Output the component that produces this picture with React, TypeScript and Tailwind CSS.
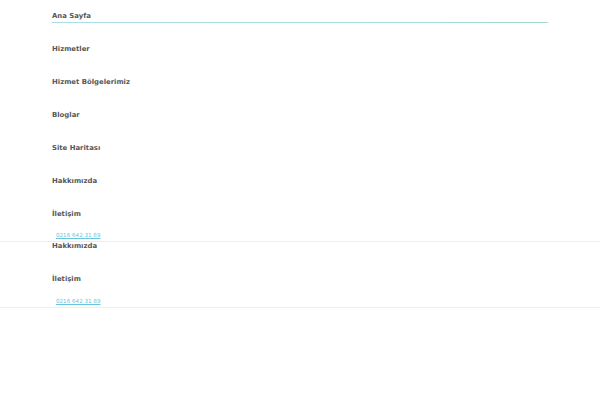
const menu = ['Ana Sayfa', 'Hizmetler', 'Hizmet Bölgelerimiz', 'Bloglar', 'Site Haritası', 'Hakkımızda', 'İletişim'];
const extra = ['Hakkımızda', 'İletişim'];

function Phone() {
  return (
    <div className="px-[56px] py-px leading-[9px] text-[5.6px] font-normal">
      <a href="#" className="text-[#6cc3dc] underline">0216 642 31 89</a>
    </div>
  );
}

export default function App() {
  return (
    <div className="min-h-[400px] bg-white font-['DejaVu_Sans',sans-serif] text-[#575757] font-bold">
      <div className="border-b border-[#eeeeee]">
        <ul className="mx-[52px]">
          {menu.map((item, i) => (
            <li key={item} className="h-[33px]">
              <a href="#" className="block pt-[11px] leading-[10px] text-[6.9px]">{item}</a>
              {i === 0 && <div className="mt-px h-px bg-gradient-to-r from-[#acdcea] to-[#9fdccb]" />}
            </li>
          ))}
        </ul>
        <div className="-mt-[1px]">
          <Phone />
        </div>
      </div>
      <div className="border-b border-[#eeeeee]">
        <ul className="mx-[52px] -mt-[12px]">
          {extra.map((item) => (
            <li key={item} className="h-[33px]">
              <a href="#" className="block pt-[11px] leading-[10px] text-[6.9px]">{item}</a>
            </li>
          ))}
        </ul>
        <Phone />
      </div>
    </div>
  );
}
